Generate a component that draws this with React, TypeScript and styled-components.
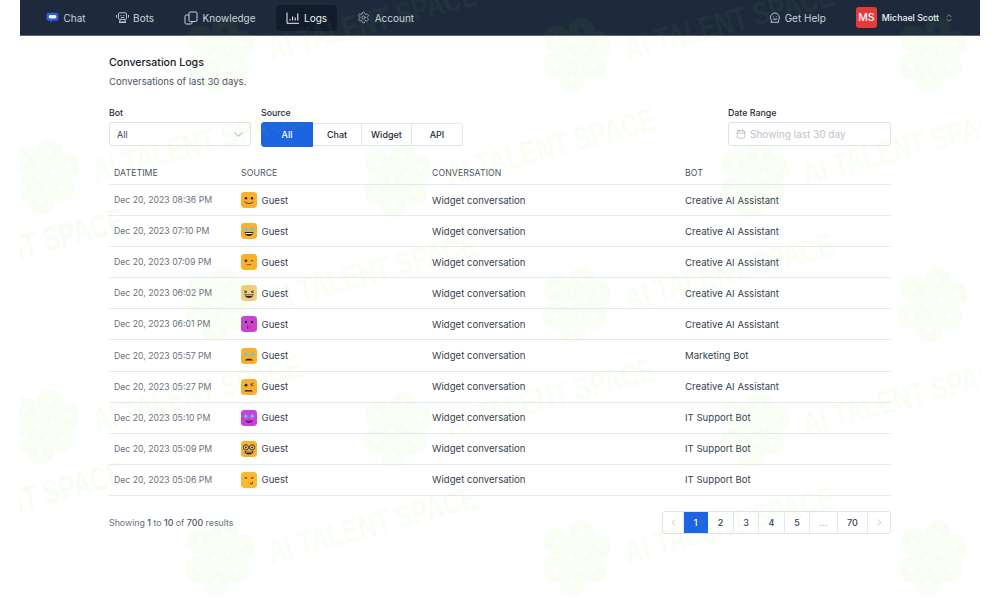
import * as React from "react";
import styled, {createGlobalStyle} from "styled-components";
import {Calendar, ChevronDown, ChevronLeft, ChevronRight, ChevronsUpDown, Settings} from "lucide-react";

const GlobalStyle = createGlobalStyle`
  html, body {
    margin: 0;
    padding: 0;
    background: #fff;
    font-family: Inter, "Liberation Sans", sans-serif;
    color: #1f2937;
  }
  * {
    box-sizing: border-box;
  }
`;

const Page = styled.div`
  position: relative;
  width: 1000px;
  height: 600px;
  overflow: hidden;
  padding: 0 20px;
`;

const NavBar = styled.nav`
  height: 36px;
  background: #1e2a3c;
  border-bottom: 1px solid #5d6673;
  display: flex;
  align-items: center;
  padding-left: 16px;
  color: #cbd2db;
  font-size: 10px;
`;

const NavItem = styled.div<{ $active?: boolean }>`
  height: 26px;
  padding: 0 10px;
  margin-right: 10px;
  display: flex;
  align-items: center;
  gap: 4.5px;
  border-radius: 4px;
  background: ${p => p.$active ? "#131c2a" : "transparent"};
  color: ${p => p.$active ? "#eef1f5" : "#cbd2db"};
  svg {
    flex: none;
  }
`;

const NavRight = styled.div`
  margin-left: auto;
  display: flex;
  align-items: center;
  padding-right: 26px;
`;

const HelpLink = styled.div`
  display: flex;
  align-items: center;
  gap: 4px;
  margin-right: 30px;
`;

const Avatar = styled.div`
  width: 21px;
  height: 21px;
  border-radius: 3px;
  background: #e5393a;
  color: #fff;
  font-size: 10.5px;
  font-weight: 500;
  display: flex;
  align-items: center;
  justify-content: center;
  margin-right: 5px;
`;

const UserName = styled.span`
  color: #eef1f5;
  font-size: 8.8px;
  font-weight: 500;
  margin-right: 5px;
`;

const Main = styled.main`
  padding: 20px 89px 0;
`;

const Title = styled.h1`
  margin: 0;
  font-size: 10.6px;
  line-height: 14px;
  font-weight: 500;
  color: #111827;
`;

const Subtitle = styled.p`
  margin: 5px 0 0;
  font-size: 9.6px;
  line-height: 14px;
  color: #4b5563;
`;

const Filters = styled.div`
  margin-top: 18px;
  display: flex;
  align-items: flex-start;
`;

const Field = styled.div<{ $width: number; $gap?: number }>`
  width: ${p => p.$width}px;
  margin-right: ${p => p.$gap ?? 0}px;
`;

const Label = styled.div`
  font-size: 8.8px;
  line-height: 12px;
  color: #1f2937;
  font-weight: 500;
  margin-bottom: 3px;
`;

const SelectBox = styled.div`
  height: 24px;
  border: 1px solid #dfe3e8;
  border-radius: 3px;
  background: #fff;
  display: flex;
  align-items: center;
  justify-content: space-between;
  padding: 0 4px 0 7px;
  font-size: 9px;
  color: #374151;
`;

const Segments = styled.div`
  display: flex;
  height: 25px;
`;

const Segment = styled.div<{ $active?: boolean; $width: number }>`
  width: ${p => p.$width}px;
  display: flex;
  align-items: center;
  justify-content: center;
  font-size: 9px;
  font-weight: 500;
  color: ${p => p.$active ? "#fff" : "#1f2937"};
  background: ${p => p.$active ? "#1c64e2" : "#fff"};
  border: 1px solid ${p => p.$active ? "#1c64e2" : "#e3e6ea"};
  border-left-width: ${p => p.$active ? 1 : 0}px;
  margin: ${p => p.$active ? 0 : "1px 0"};
  border-radius: ${p => p.$active ? "3px 0 0 3px" : "0"};
  &:last-child {
    border-radius: 0 3px 3px 0;
  }
`;

const DateBox = styled(SelectBox)`
  justify-content: flex-start;
  gap: 4px;
  padding-left: 7px;
  color: #bcc2cb;
  font-size: 10px;
`;

const Spacer = styled.div`
  flex: 1;
`;

const Table = styled.div`
  margin-top: 17px;
`;

const Row = styled.div<{ $head?: boolean }>`
  height: ${p => p.$head ? 21 : 31.1}px;
  display: grid;
  grid-template-columns: 127px 191px 253px 1fr;
  align-items: center;
  border-bottom: 1px solid #e7e9ed;
  padding-bottom: ${p => p.$head ? 2 : 0}px;
`;

const HeadCell = styled.div`
  padding-left: 5px;
  font-size: 8.7px;
  color: #4b5563;
  letter-spacing: 0.1px;
`;

const DateCell = styled.div`
  padding-left: 5px;
  font-size: 8.7px;
  color: #6b7280;
  white-space: nowrap;
`;

const SourceCell = styled.div`
  padding-left: 5px;
  display: flex;
  align-items: center;
  gap: 4.5px;
  font-size: 9.6px;
  color: #374151;
`;

const TextCell = styled.div`
  padding-left: 5px;
  font-size: 9.6px;
  color: #374151;
  white-space: nowrap;
`;

const Footer = styled.div`
  margin-top: 15px;
  display: flex;
  align-items: center;
  justify-content: space-between;
`;

const Results = styled.div`
  font-size: 8.8px;
  color: #6b7280;
  b {
    font-weight: 500;
    color: #4b5563;
  }
`;

const Pager = styled.div`
  display: flex;
  height: 23px;
  border: 1px solid #e1e4e8;
  border-radius: 3px;
  overflow: hidden;
  background: #fff;
`;

const PageCell = styled.div<{ $active?: boolean; $width: number; $muted?: boolean }>`
  width: ${p => p.$width}px;
  display: flex;
  align-items: center;
  justify-content: center;
  font-size: 9px;
  font-weight: 500;
  color: ${p => p.$active ? "#fff" : p.$muted ? "#9ca3af" : "#374151"};
  background: ${p => p.$active ? "#1c64e2" : "transparent"};
  border-right: 1px solid ${p => p.$active ? "#1c64e2" : "#e6e8ec"};
  &:last-child {
    border-right: 0;
  }
`;

const Watermark = styled.div`
  position: absolute;
  top: 0;
  bottom: 0;
  left: 20px;
  right: 20px;
  pointer-events: none;
  overflow: hidden;
`;

const Stamp = styled.div`
  position: absolute;
  display: flex;
  align-items: center;
  color: #79ea2a;
  opacity: 0.05;
  transform: translate(-36px, -36px);
`;

const StampText = styled.span`
  position: absolute;
  left: 84px;
  top: 11px;
  font-family: "Liberation Sans", sans-serif;
  font-size: 34px;
  line-height: 38px;
  font-weight: 700;
  white-space: nowrap;
  transform-origin: 0 50%;
  transform: rotate(-15deg) scaleX(0.72);
`;

const FACES: Array<{ bg: string; kind: string }> = [
    {bg: "#fbb02d", kind: "smile"},
    {bg: "#fbb02d", kind: "tears"},
    {bg: "#fbb02d", kind: "wink"},
    {bg: "#f0cd80", kind: "grin"},
    {bg: "#cc3fd8", kind: "kiss"},
    {bg: "#fbb02d", kind: "cry"},
    {bg: "#fbb02d", kind: "sad"},
    {bg: "#cc3fd8", kind: "stars"},
    {bg: "#fbb02d", kind: "glasses"},
    {bg: "#fcb733", kind: "smirk"}
];

const Eyes = () => (
    <>
        <circle cx="5" cy="6.3" r="1.2" fill="#2b2118"/>
        <circle cx="11" cy="6.3" r="1.2" fill="#2b2118"/>
    </>
);

const Star = ({x}: { x: number }) => (
    <path d={`M${x} 3.4l.9 1.9 1.9.9-1.9.9-.9 1.9-.9-1.9-1.9-.9 1.9-.9z`} fill="#5ec8f5"/>
);

const Grin = () => <path d="M3.6 9h8.8c0 2.6-1.9 4-4.4 4s-4.4-1.4-4.4-4z" fill="#2b2118"/>;

const Face = ({bg, kind}: { bg: string; kind: string }) => (
    <svg width="16" height="16" viewBox="0 0 16 16" style={{flex: "none"}}>
        <rect width="16" height="16" rx="3.4" fill={bg}/>
        {kind === "smile" && <>
            <Eyes/>
            <path d="M3.8 9.6c1 2.4 7.4 2.4 8.4 0" fill="none" stroke="#2b2118" strokeWidth=".9"/>
        </>}
        {kind === "tears" && <>
            <Grin/>
            <path d="M4.6 10h6.8v1H4.6z" fill="#fff"/>
            <Star x={4.8}/><Star x={11.2}/>
        </>}
        {kind === "wink" && <>
            <circle cx="5" cy="6.8" r="1.3" fill="#2b2118"/>
            <path d="M9.6 7.2c.6-1 1.8-1 2.6 0" fill="none" stroke="#2b2118" strokeWidth=".8"/>
            <path d="M5.6 10.6h4.6" stroke="#6b4a12" strokeWidth=".8"/>
        </>}
        {kind === "grin" && <>
            <path d="M3.2 5.6l2.8 1.2-2.8 1.2M12.8 5.6L10 6.8l2.8 1.2" fill="none" stroke="#2b2118" strokeWidth=".8"/>
            <Grin/>
            <path d="M4.4 9.6h7.2v1H4.4z" fill="#fff"/>
        </>}
        {kind === "kiss" && <>
            <circle cx="5" cy="6" r="1.3" fill="#2b2118"/>
            <circle cx="11" cy="6" r="1.3" fill="#2b2118"/>
            <path d="M6.4 10.2c1 .3 1 .9.2 1.2.8.3.8 1-.2 1.3" fill="none" stroke="#2b2118" strokeWidth=".8"/>
            <path d="M10.8 13.2c-2-1.4-2.4-2.2-1.9-2.9.4-.5 1.4-.3 1.7.3.4-.6 1.5-.7 1.8-.1.4.7-.1 1.6-1.6 2.7z" fill="#e8404e"/>
        </>}
        {kind === "cry" && <>
            <path d="M4 12.6c.4-2.6 7.6-2.6 8 0z" fill="#2b2118"/>
            <Star x={4.8}/><Star x={11.2}/>
        </>}
        {kind === "sad" && <>
            <circle cx="5" cy="6.2" r="1.4" fill="#2b2118"/>
            <path d="M9.4 5.4l3-.9M9.8 6.8c.8-.6 1.8-.6 2.6 0" fill="none" stroke="#2b2118" strokeWidth=".8"/>
            <path d="M3.6 12.4c.8-3 7-3 8 0z" fill="#2b2118"/>
            <path d="M5.6 10.6h4.2" stroke="#fff" strokeWidth=".8"/>
        </>}
        {kind === "stars" && <>
            <Star x={4.8}/><Star x={11.2}/>
            <path d="M4.4 10.4c1 2.8 6.2 2.8 7.2 0" fill="#7a2384" stroke="#3b1142" strokeWidth=".7"/>
        </>}
        {kind === "glasses" && <>
            <circle cx="4.9" cy="6.4" r="2.6" fill="#e9c98a" stroke="#2b2118" strokeWidth=".9"/>
            <circle cx="11.1" cy="6.4" r="2.6" fill="#e9c98a" stroke="#2b2118" strokeWidth=".9"/>
            <circle cx="4.9" cy="6.4" r=".9" fill="#2b2118"/>
            <circle cx="11.1" cy="6.4" r=".9" fill="#2b2118"/>
            <path d="M3.6 10h8.8c0 2.2-1.9 3.4-4.4 3.4S3.6 12.2 3.6 10z" fill="#2b2118"/>
            <path d="M4.8 10.5h6.4v.9H4.8z" fill="#fff"/>
        </>}
        {kind === "smirk" && <>
            <path d="M3.4 5.8h2.8M4.6 5.8l.5 1M9.8 5.8h2.8M11.2 5.8l.4 1" fill="none" stroke="#3a2a10" strokeWidth=".7"/>
            <path d="M11.4 9.4v2.4H8.8" fill="none" stroke="#3a2a10" strokeWidth=".7"/>
        </>}
    </svg>
);

const ChatIcon = () => (
    <svg width="13" height="13" viewBox="0 0 13 13">
        <path d="M2.5 1.8h8a2 2 0 0 1 2 2v4a2 2 0 0 1-2 2H6.5l-2.500 2v-2H2.5a2 2 0 0 1-2-2v-4a2 2 0 0 1 2-2z" fill="#2f5be0"/>
        <rect x="2.6" y="4" width="7.8" height="3.4" rx="1.7" fill="#eef2ff"/>
    </svg>
);

const BotIcon = () => (
    <svg width="13" height="13" viewBox="0 0 13 13" fill="none" stroke="#cbd2db" strokeWidth=".9">
        <rect x="2.5" y="1.8" width="8" height="6.6" rx="1"/>
        <path d="M.5 4v2.6M12.5 4v2.6M4.5 4.6h1.200M7.3 4.6h1.200M4.8 6.5h3.400M4.400 8.400l-1 2.600h6.200l-1-2.600M3 11.500h7"/>
    </svg>
);

const KnowledgeIcon = () => (
    <svg width="14" height="14" viewBox="0 0 14 14" fill="none" stroke="#cbd2db" strokeWidth="1">
        <rect x="5" y="1" width="8" height="9.5" rx="1.2"/>
        <path d="M5 4H2.2A1.2 1.2 0 0 0 1 5.2v6.6A1.2 1.2 0 0 0 2.2 13h4.6A1.2 1.2 0 0 0 8 11.800v-1.300"/>
    </svg>
);

const LogsIcon = () => (
    <svg width="14" height="14" viewBox="0 0 14 14" fill="none" stroke="#eef1f5" strokeWidth="1">
        <path d="M1 1.500v10.800h12"/>
        <path d="M4 9.500V8M6.600 9.500V5.500M9.200 9.500V6.500M11.800 9.500V2.500" strokeWidth="1.100"/>
    </svg>
);

const HelpIcon = () => (
    <svg width="12" height="12" viewBox="0 0 12 12" fill="none" stroke="#cbd2db" strokeWidth=".9">
        <path d="M6 1a4.600 4.600 0 0 0-4.600 4.500c0 1.200.5 2.200 1.200 3L2 10.600l2.500-.6c.5.200 1 .3 1.500.3h3.500V8.200A4.500 4.500 0 0 0 6 1z"/>
        <path d="M3.800 6.600c.8 1 3.600 1 4.400 0M4.300 4.600h.6M7.100 4.600h.6"/>
    </svg>
);

const FlowerMark = () => (
    <svg width="72" height="72" viewBox="0 0 72 72" fill="currentColor" style={{transform: "rotate(-18deg)"}}>
        <g fillRule="evenodd">
            {[[22, 14], [48, 14], [60, 32], [48, 52], [24, 58], [12, 40], [30, 34], [46, 34]].map(([x, y], i) => (
                <path key={i}
                      d={`M${x - 13} ${y}a13 13 0 1 0 26 0a13 13 0 1 0 -26 0zM${x - 3} ${y}a3 3 0 1 1 6 0a3 3 0 1 1 -6 0z`}/>
            ))}
        </g>
    </svg>
);

// page x/y of each stamp, the layer itself starts at x=20
const STAMPS: Array<[number, number]> = [
    [-133, 281], [-133, 534],
    [45, 177], [45, 427],
    [220, 55], [220, 305], [220, 558],
    [398, 180], [398, 430], [398, -70],
    [577, 55], [577, 305], [577, 558],
    [755, 180], [755, 430],
    [933, 55], [933, 305], [933, 558]
];

const DATES = [
    "08:36 PM", "07:10 PM", "07:09 PM", "06:02 PM", "06:01 PM",
    "05:57 PM", "05:27 PM", "05:10 PM", "05:09 PM", "05:06 PM"
];

const BOTS = [
    "Creative AI Assistant", "Creative AI Assistant", "Creative AI Assistant", "Creative AI Assistant",
    "Creative AI Assistant", "Marketing Bot", "Creative AI Assistant", "IT Support Bot", "IT Support Bot",
    "IT Support Bot"
];

const PAGES: Array<[React.ReactNode, number, boolean?, boolean?]> = [
    [<ChevronLeft key="l" size={11} strokeWidth={1.5}/>, 21, false, true],
    ["1", 24, true],
    ["2", 26],
    ["3", 25],
    ["4", 26],
    ["5", 25],
    ["...", 28, false, true],
    ["70", 30],
    [<ChevronRight key="r" size={11} strokeWidth={1.5}/>, 22, false, true]
];

const App = () => {
    return (
        <Page>
            <GlobalStyle/>
            <NavBar>
                <NavItem><ChatIcon/>Chat</NavItem>
                <NavItem><BotIcon/>Bots</NavItem>
                <NavItem><KnowledgeIcon/>Knowledge</NavItem>
                <NavItem $active><LogsIcon/>Logs</NavItem>
                <NavItem><Settings size={13} strokeWidth={1.2}/>Account</NavItem>
                <NavRight>
                    <HelpLink><HelpIcon/>Get Help</HelpLink>
                    <Avatar>MS</Avatar>
                    <UserName>Michael Scott</UserName>
                    <ChevronsUpDown size={10} strokeWidth={1.4} color="#cbd2db"/>
                </NavRight>
            </NavBar>
            <Main>
                <Title>Conversation Logs</Title>
                <Subtitle>Conversations of last 30 days.</Subtitle>
                <Filters>
                    <Field $width={142} $gap={10}>
                        <Label>Bot</Label>
                        <SelectBox>All<ChevronDown size={15} strokeWidth={1} color="#6b7280"/></SelectBox>
                    </Field>
                    <Field $width={202}>
                        <Label>Source</Label>
                        <Segments>
                            <Segment $active $width={52}>All</Segment>
                            <Segment $width={49}>Chat</Segment>
                            <Segment $width={50}>Widget</Segment>
                            <Segment $width={51}>API</Segment>
                        </Segments>
                    </Field>
                    <Spacer/>
                    <Field $width={163}>
                        <Label>Date Range</Label>
                        <DateBox><Calendar size={10} strokeWidth={1.2} color="#8b93a0"/>Showing last 30 day</DateBox>
                    </Field>
                </Filters>
                <Table>
                    <Row $head>
                        <HeadCell>DATETIME</HeadCell>
                        <HeadCell>SOURCE</HeadCell>
                        <HeadCell>CONVERSATION</HeadCell>
                        <HeadCell>BOT</HeadCell>
                    </Row>
                    {DATES.map((time, i) => (
                        <Row key={time}>
                            <DateCell>Dec 20, 2023 {time}</DateCell>
                            <SourceCell><Face {...FACES[i]}/>Guest</SourceCell>
                            <TextCell>Widget conversation</TextCell>
                            <TextCell>{BOTS[i]}</TextCell>
                        </Row>
                    ))}
                </Table>
                <Footer>
                    <Results>Showing <b>1</b> to <b>10</b> of <b>700</b> results</Results>
                    <Pager>
                        {PAGES.map(([label, width, active, muted], i) => (
                            <PageCell key={i} $width={width} $active={active} $muted={muted}>{label}</PageCell>
                        ))}
                    </Pager>
                </Footer>
            </Main>
            <Watermark>
                {STAMPS.map(([x, y]) => (
                    <Stamp key={`${x}-${y}`} style={{left: x - 20, top: y}}>
                        <FlowerMark/>
                        <StampText>AI TALENT SPACE</StampText>
                    </Stamp>
                ))}
            </Watermark>
        </Page>
    );
};

export default App;
